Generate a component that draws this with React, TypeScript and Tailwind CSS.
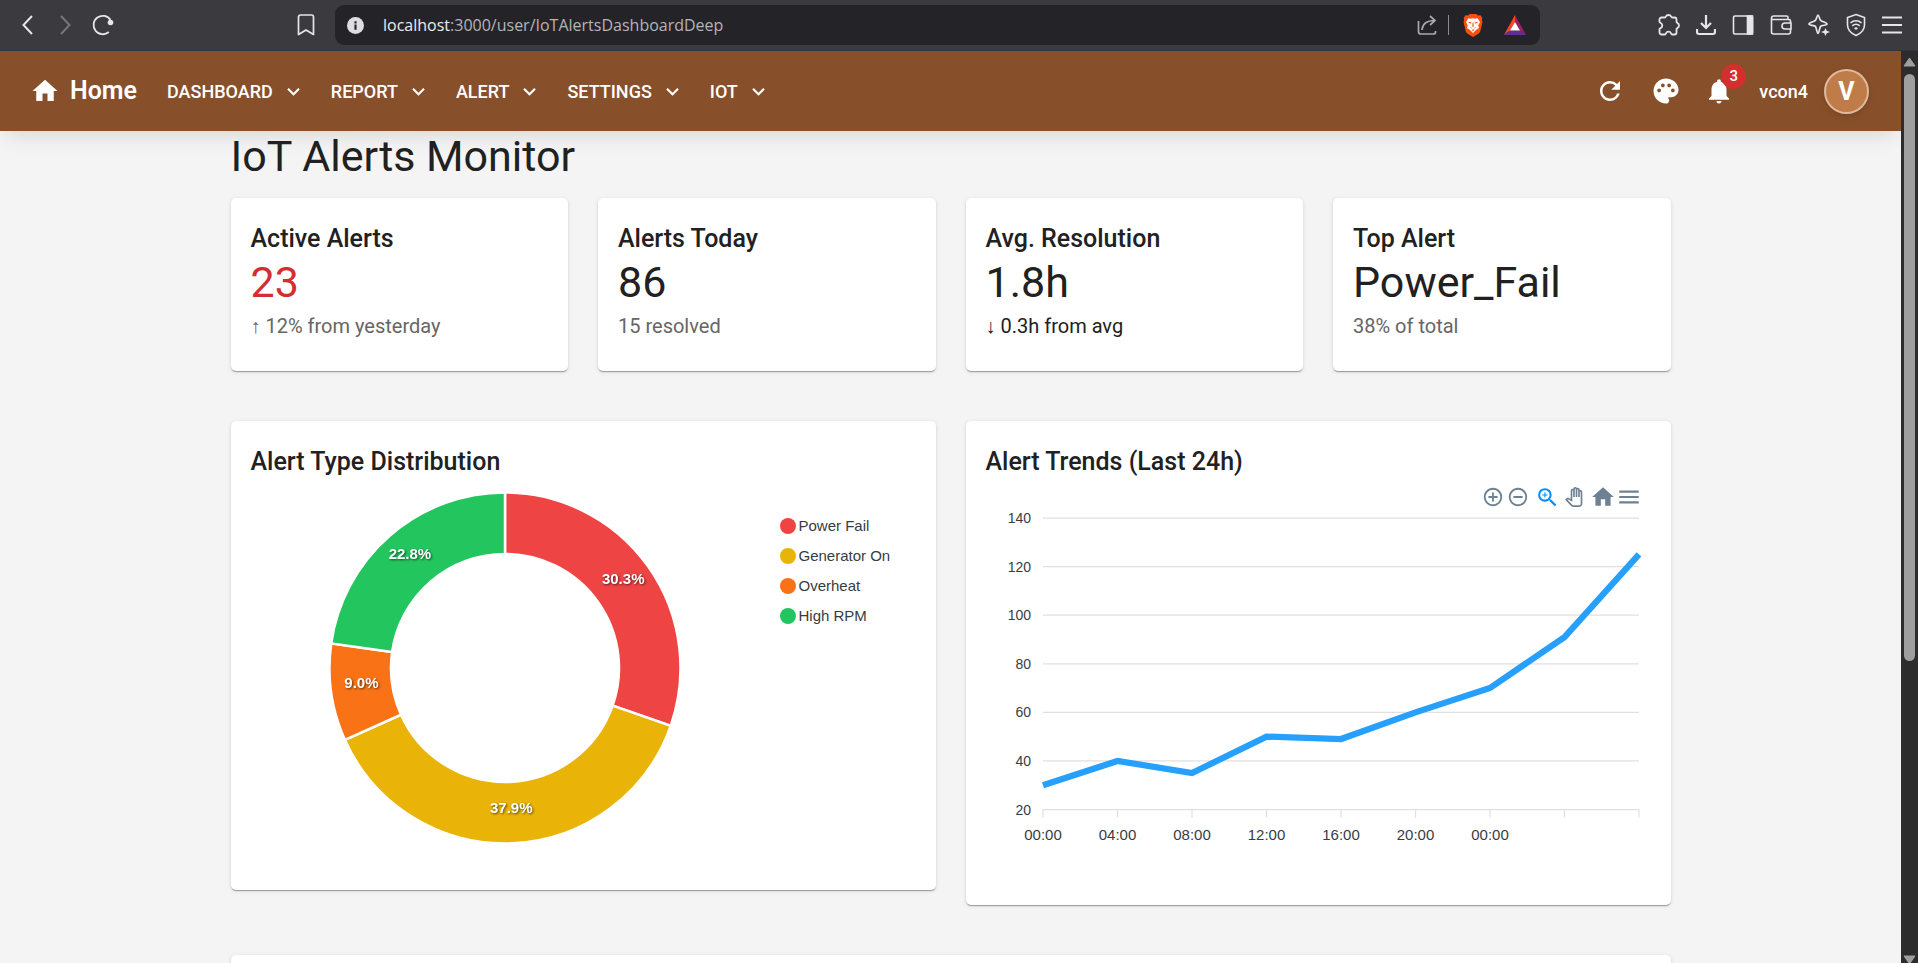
import React from 'react';
import {
  MdAddCircleOutline,
  MdHome,
  MdKeyboardArrowDown,
  MdMenu,
  MdNotifications,
  MdOutlinePanTool,
  MdRefresh,
  MdRemoveCircleOutline,
  MdZoomIn,
} from 'react-icons/md';

const menuItems = ['DASHBOARD', 'REPORT', 'ALERT', 'SETTINGS', 'IOT'];

const stats = [
  { title: 'Active Alerts', value: '23', arrow: '↑', note: '12% from yesterday', valueClass: 'text-[#d32f2f]', noteClass: 'text-[#666666]' },
  { title: 'Alerts Today', value: '86', arrow: '', note: '15 resolved', valueClass: '', noteClass: 'text-[#666666]' },
  { title: 'Avg. Resolution', value: '1.8h', arrow: '↓', note: '0.3h from avg', valueClass: '', noteClass: '' },
  { title: 'Top Alert', value: 'Power_Fail', arrow: '', note: '38% of total', valueClass: '', noteClass: 'text-[#666666]' },
];

const alertTypes = [
  { name: 'Power Fail', count: 44, fill: 'fill-[#ef4444]', dot: 'bg-[#ef4444]' },
  { name: 'Generator On', count: 55, fill: 'fill-[#eab308]', dot: 'bg-[#eab308]' },
  { name: 'Overheat', count: 13, fill: 'fill-[#f97316]', dot: 'bg-[#f97316]' },
  { name: 'High RPM', count: 33, fill: 'fill-[#22c55e]', dot: 'bg-[#22c55e]' },
];

const trend = [30, 40, 35, 50, 49, 60, 70, 91, 125];
const trendLabels = ['00:00', '04:00', '08:00', '12:00', '16:00', '20:00', '00:00'];
const yTicks = [140, 120, 100, 80, 60, 40, 20];

const point = (radius: number, angle: number) => [176 + radius * Math.sin(angle), 176 - radius * Math.cos(angle)];

const DonutChart: React.FC = () => {
  const total = alertTypes.reduce((sum, t) => sum + t.count, 0);
  const outer = 175.5;
  const inner = 114;
  let angle = 0;

  const slices = alertTypes.map((t) => {
    const start = angle;
    const end = start + (t.count / total) * Math.PI * 2;
    angle = end;
    const large = end - start > Math.PI ? 1 : 0;
    const [x1, y1] = point(outer, start);
    const [x2, y2] = point(outer, end);
    const [x3, y3] = point(inner, end);
    const [x4, y4] = point(inner, start);
    const [lx, ly] = point(145, (start + end) / 2);
    return {
      ...t,
      d: `M${x1} ${y1}A${outer} ${outer} 0 ${large} 1 ${x2} ${y2}L${x3} ${y3}A${inner} ${inner} 0 ${large} 0 ${x4} ${y4}Z`,
      lx,
      ly,
      label: `${((t.count / total) * 100).toFixed(1)}%`,
    };
  });

  return (
    <svg viewBox="0 0 352 352" className="h-[352px] w-[352px]" role="img" aria-label="Alert type distribution">
      {slices.map((s) => (
        <path key={s.name} d={s.d} className={s.fill} stroke="#fff" strokeWidth="2.5" />
      ))}
      {slices.map((s) => (
        <text
          key={s.name}
          x={s.lx}
          y={s.ly}
          textAnchor="middle"
          className="fill-white font-['Liberation_Sans',sans-serif] text-[15px] font-bold drop-shadow-[1px_1px_1px_rgba(0,0,0,0.6)]"
        >
          {s.label}
        </text>
      ))}
    </svg>
  );
};

const TrendChart: React.FC = () => {
  const left = 57;
  const right = 653;
  const top = 9;
  const bottom = 300.5;
  const x = (i: number) => left + (i * (right - left)) / (trend.length - 1);
  const y = (v: number) => bottom - ((v - 20) / 120) * (bottom - top);

  return (
    <svg
      viewBox="0 0 665 366"
      className="block w-full fill-[#373d3f] font-['Liberation_Sans',sans-serif]"
      role="img"
      aria-label="Alert trends"
    >
      {yTicks.map((t) => (
        <g key={t}>
          <line x1={left} x2={right} y1={y(t)} y2={y(t)} stroke="#e0e0e0" strokeWidth="1.25" />
          <text x="45" y={y(t) + 5} textAnchor="end" className="text-[14px]">{t}</text>
        </g>
      ))}
      {trend.map((_, i) => (
        <line key={i} x1={x(i)} x2={x(i)} y1={bottom} y2={bottom + 8} stroke="#e0e0e0" strokeWidth="1.25" />
      ))}
      {trendLabels.map((t, i) => (
        <text key={i} x={x(i)} y="331" textAnchor="middle" className="text-[15px]">{t}</text>
      ))}
      <polyline
        points={trend.map((v, i) => `${x(i)},${y(v)}`).join(' ')}
        fill="none"
        stroke="#26a0fc"
        strokeWidth="6.25"
      />
    </svg>
  );
};

const Card: React.FC<{ title?: string; children?: React.ReactNode }> = ({ title, children }) => (
  <section className="rounded-[5px] bg-white px-5 pt-[21px] pb-[30px] shadow-[0_2px_1px_-1px_rgba(0,0,0,0.2),0_1px_1px_rgba(0,0,0,0.14),0_1px_4px_rgba(0,0,0,0.12)]">
    {title && <h2 className="text-[25px] leading-[40px] font-medium">{title}</h2>}
    {children}
  </section>
);

const BrowserBar: React.FC = () => (
  <div className="flex h-[51px] shrink-0 items-center border-b border-[#2f3238] bg-[#3b3a3f] pr-4 pl-[18px] text-[#e6e6ea]">
    <div className="flex w-[317px] shrink-0 items-center">
      <button aria-label="Back" className="mr-[17px]">
        <svg width="20" height="20" viewBox="0 0 20 20" fill="none" stroke="currentColor" strokeWidth="2"><path d="m14 1-8.5 9 8.5 9" /></svg>
      </button>
      <button aria-label="Forward" className="mr-[17px] text-[#77767b]">
        <svg width="20" height="20" viewBox="0 0 20 20" fill="none" stroke="currentColor" strokeWidth="2"><path d="m6 1 8.5 9L6 19" /></svg>
      </button>
      <button aria-label="Reload">
        <svg width="22" height="22" viewBox="0 0 22 22" fill="none" stroke="currentColor" strokeWidth="1.8">
          <path d="M16.8 18A9.2 9.2 0 1 1 18.5 6" />
          <circle cx="18.5" cy="8.5" r="2.8" fill="currentColor" stroke="none" />
        </svg>
      </button>
      <button aria-label="Bookmark" className="mr-[20px] ml-auto">
        <svg width="18" height="22" viewBox="0 0 18 22" fill="none" stroke="currentColor" strokeWidth="1.7" strokeLinejoin="round"><path d="M1.5 3a2 2 0 0 1 2-2h11a2 2 0 0 1 2 2v17.5L9 16l-7.5 4.500z" /></svg>
      </button>
    </div>
    <div className="flex h-10 flex-1 items-center rounded-[9px] bg-[#242328] pr-[14px] pl-3">
      <svg width="17" height="17" viewBox="0 0 16 16" className="shrink-0">
        <circle cx="8" cy="8" r="8" fill="#dddde2" />
        <path d="M7 7h2v5H7zM7 4h2v2H7z" fill="#242328" />
      </svg>
      <div className="ml-[19px] flex-1 font-['Open_Sans',sans-serif] text-[16px] text-[#b5b4ba]">
        <span className="text-[#ececf0]">localhost</span>:3000/user/IoTAlertsDashboardDeep
      </div>
      <div className="flex items-center">
        <button aria-label="Share" className="mr-[11px] text-[#a9a8ad]">
          <svg width="20" height="20" viewBox="0 0 20 20" fill="none" stroke="currentColor" strokeWidth="1.7">
            <path d="M1.5 6v10.500A2.500 2.500 0 0 0 4 19h12.500a2 2 0 0 0 2-2v-1M5 15c.5-6 4-9.500 12.500-9.500M13 1l5 4.500-5 4.500" />
          </svg>
        </button>
        <div className="mr-[14px] h-5 w-px bg-[#8c8b90]" />
        <button aria-label="Brave Shields" className="mr-[21px]">
          <svg width="20" height="23" viewBox="0 0 20 23">
            <path d="M5 1.5 6.800 0h6.400L15 1.500l2.500-.2L19.300 4l-.4 2 .6 2-2.300 9.500c-.3 1-1 1.700-1.800 2.300L10 23l-5.400-3.200c-.8-.6-1.500-1.300-1.800-2.300L.5 8l.6-2-.4-2 1.800-2.700z" fill="#fb4f0c" />
            <path d="m3 8 2.500-3.800 2.300.5L10 4.200l2.200.5 2.300-.5L17 8l-1.800 3.500.8 2.500-3 2-3 3-3-3-3-2 .8-2.500z" fill="#fff" />
            <path d="m5.200 7.700 3.300.7-.4 1.200-2.300-.5zM14.800 7.700l-3.300.7.400 1.200 2.300-.5zM9.600 8.500h.8l.3 4-.7.500-.7-.5zM7 12.800l2 1.200-.8.600zM13 12.800l-2 1.200.8.600zM8.500 16l1.500-.7 1.500.7-1.500 1z" fill="#fb4f0c" />
          </svg>
        </button>
        <button aria-label="Brave Rewards">
          <svg width="22" height="20" viewBox="0 0 22 20">
            <path d="M11 0 0 20l6-4.500L11 7z" fill="#ff4724" />
            <path d="m11 0 11 20-6-4.500L11 7z" fill="#9e1f63" />
            <path d="M0 20h22l-6-4.500H6z" fill="#662d91" />
            <path d="m11 7 5 8.500H6z" fill="#fff" />
          </svg>
        </button>
      </div>
    </div>
    <div className="ml-[118px] flex items-center gap-4">
      <button aria-label="Extensions">
        <svg width="22" height="22" viewBox="0 0 22 22" fill="none" stroke="currentColor" strokeWidth="1.8" strokeLinejoin="round">
          <path d="M1.5 5.500a2 2 0 0 1 2-2H7c.8 0 .6-2.500 3.500-2.500S13.200 3.500 14 3.500h2.500a2 2 0 0 1 2 2V8c0 .8 2.500 1 2.500 3.500s-2.500 2.700-2.500 3.500v3.500a2 2 0 0 1-2 2H14c-1 0-.7-2.800-3.500-2.800S8 20.500 7 20.500H3.500a2 2 0 0 1-2-2V15c0-1 2.800-.7 2.800-3.500S1.500 9 1.500 8z" />
        </svg>
      </button>
      <button aria-label="Downloads">
        <svg width="20" height="22" viewBox="0 0 20 22" fill="none" stroke="currentColor" strokeWidth="2.2"><path d="M10 1v13M5 9l5 5 5-5M1 15v3a2 2 0 0 0 2 2h14a2 2 0 0 0 2-2v-3" /></svg>
      </button>
      <button aria-label="Sidebar">
        <svg width="22" height="22" viewBox="0 0 22 22" fill="none" stroke="currentColor" strokeWidth="1.6"><rect x="1.5" y="2" width="19" height="18" rx="1.5" /><path d="M15.500 2h5v18h-5z" fill="currentColor" /></svg>
      </button>
      <button aria-label="Wallet">
        <svg width="22" height="22" viewBox="0 0 22 22" fill="none" stroke="currentColor" strokeWidth="1.6"><path d="M20.500 9V7A1.500 1.500 0 0 0 19 5.500H1.500M20.500 15v3a2 2 0 0 1-2 2h-15a2 2 0 0 1-2-2V4a2 2 0 0 1 2-2h13a1.500 1.500 0 0 1 1.500 1.500v2M21 9h-6a3 3 0 0 0 0 6h6z" /></svg>
      </button>
      <button aria-label="Leo AI">
        <svg width="22" height="22" viewBox="0 0 22 22" fill="none" stroke="currentColor" strokeWidth="1.7" strokeLinejoin="round"><path d="M10 1c.9 0 1.500 4.300 2.600 5.400S19 8.500 19 10s-5.300 1-6.400 2.400S11 19.500 10 19.500s-1.500-5.800-2.600-7.100S1 11.500 1 10s5.300-2.500 6.400-3.600S9.100 1 10 1z" /><path d="m17.500 14 1.200 2.800 3.300 1.200-3.300 1.200-1.200 2.800-1.200-2.800L13 18l3.300-1.200z" fill="currentColor" stroke="none" /></svg>
      </button>
      <button aria-label="VPN">
        <svg width="20" height="24" viewBox="0 0 20 24" fill="none" stroke="currentColor" strokeWidth="1.6"><path d="m10 1.500 8.500 3V12c0 5-4 8.500-8.500 10.500C5.500 20.500 1.500 17 1.500 12V4.500zM4.500 10a8 8 0 0 1 11 0M6.300 12.800a5.500 5.500 0 0 1 7.400 0" /><path d="M8 15.200a3 3 0 0 1 4 0L10 17z" fill="currentColor" stroke="none" /></svg>
      </button>
      <button aria-label="Menu">
        <svg width="20" height="20" viewBox="0 0 20 20" stroke="currentColor" strokeWidth="1.8"><path d="M0 2.500h20M0 10h20M0 17.500h20" /></svg>
      </button>
    </div>
  </div>
);

const NavBar: React.FC = () => (
  <header className="z-10 flex h-20 shrink-0 items-center justify-between bg-[#88502a] pr-8 pl-[30px] text-white shadow-[0_10px_20px_-6px_rgba(0,0,0,0.12)]">
    <div className="flex items-center">
      <a href="#" className="flex items-center gap-[10px] text-[25px] font-semibold">
        <MdHome size={30} />
        Home
      </a>
      <nav className="ml-[30px] flex items-center gap-[25px]">
        {menuItems.map((item) => (
          <button key={item} className="flex items-center gap-2 text-[18px] font-medium">
            {item}
            <MdKeyboardArrowDown size={25} />
          </button>
        ))}
      </nav>
    </div>
    <div className="flex items-center">
      <button aria-label="Refresh" className="mr-[26px]"><MdRefresh size={30} /></button>
      <button aria-label="Theme" className="mr-[23px]">
        <svg width="30" height="30" viewBox="0 0 24 24" fill="currentColor">
          <path d="M12 2C6.490 2 2 6.490 2 12s4.490 10 10 10c1.380 0 2.500-1.120 2.500-2.500 0-.610-.230-1.200-.640-1.670-.080-.100-.130-.210-.130-.330 0-.280.220-.500.500-.500H16c3.310 0 6-2.690 6-6 0-4.960-4.490-9-10-9zm5.500 11c-.830 0-1.500-.670-1.500-1.500s.670-1.500 1.500-1.500 1.500.670 1.500 1.500-.670 1.500-1.500 1.500zm-3-4c-.830 0-1.500-.670-1.500-1.500S13.670 6 14.500 6s1.500.670 1.500 1.500S15.330 9 14.500 9zM5 11.500c0-.830.670-1.500 1.500-1.500s1.500.670 1.500 1.500S7.330 13 6.500 13 5 12.330 5 11.500zm6-4c0 .830-.670 1.500-1.500 1.500S8 8.330 8 7.500 8.670 6 9.500 6s1.500.670 1.500 1.500z" />
        </svg>
      </button>
      <button aria-label="Notifications" className="relative mr-[25px]">
        <MdNotifications size={30} />
        <span className="absolute -top-3 -right-3 flex h-[25px] w-[25px] items-center justify-center rounded-full bg-[#d32f2f] text-[15px] font-medium">3</span>
      </button>
      <span className="mr-4 text-[18px] font-medium">vcon4</span>
      <button className="h-[45px] w-[45px] rounded-full border-2 border-[#dfb99b] bg-[#c07c48] text-[25px] leading-none font-bold shadow-[0_2px_6px_rgba(0,0,0,0.15)]">V</button>
    </div>
  </header>
);

const ScrollTrack: React.FC = () => (
  <div className="flex w-[17px] shrink-0 flex-col items-center bg-[#2c2c2c] pt-[6px]" aria-hidden="true">
    <svg width="13" height="10" viewBox="0 0 13 10" className="shrink-0"><path d="M6.500 1 12 9H1z" fill="#9f9f9f" stroke="#9f9f9f" strokeLinejoin="round" /></svg>
    <div className="flex w-full flex-1 justify-center pt-[7px]">
      <div className="h-2/3 w-[11px] rounded-full bg-[#9f9f9f]" />
    </div>
    <svg width="13" height="8" viewBox="0 0 13 8" className="shrink-0"><path d="M1 1h11L6.500 9z" fill="#9f9f9f" stroke="#9f9f9f" strokeLinejoin="round" /></svg>
  </div>
);

export default function App() {
  return (
    <div className="flex h-screen flex-col overflow-hidden font-[Roboto,sans-serif] text-[#212121]">
      <BrowserBar />
      <div className="flex min-h-0 flex-1">
        <div className="flex min-w-0 flex-1 flex-col overflow-hidden bg-[#f4f4f4]">
          <NavBar />
          <main className="mx-auto w-full max-w-[1440px]">
            <h1 className="mb-4 text-[43px] leading-[51px]">IoT Alerts Monitor</h1>

            <div className="mb-[50px] grid grid-cols-4 gap-[30px]">
              {stats.map((s) => (
                <Card key={s.title} title={s.title}>
                  <p className={`mb-[5px] text-[43px] leading-[47px] ${s.valueClass}`}>{s.value}</p>
                  <p className={`text-[20px] leading-[30px] ${s.noteClass}`}>
                    {s.arrow && <span className="font-['Liberation_Sans',sans-serif]">{s.arrow}</span>} {s.note}
                  </p>
                </Card>
              ))}
            </div>

            <div className="mb-[50px] grid grid-cols-2 items-start gap-[30px]">
              <Card title="Alert Type Distribution">
                <div className="flex h-[378px] items-start">
                  <div className="flex flex-1 justify-center pt-[10px] pr-5">
                    <DonutChart />
                  </div>
                  <ul className="w-[136px] pt-[29px] font-['Liberation_Sans',sans-serif] text-[15px] leading-[30px] text-[#373d3f]">
                    {alertTypes.map((t) => (
                      <li key={t.name} className="flex items-center gap-[3px]">
                        <span className={`h-4 w-4 rounded-full ${t.dot}`} />
                        {t.name}
                      </li>
                    ))}
                  </ul>
                </div>
              </Card>

              <Card title="Alert Trends (Last 24h)">
                <div className="mt-[3px] flex h-6 items-center justify-end pr-[9px] text-[#6e8192]">
                  <button aria-label="Zoom in" className="mr-[3px]"><MdAddCircleOutline size={22} /></button>
                  <button aria-label="Zoom out" className="mr-[6px]"><MdRemoveCircleOutline size={22} /></button>
                  <button aria-label="Selection zoom" className="mr-[4px] text-[#008ffb]"><MdZoomIn size={25} /></button>
                  <button aria-label="Pan" className="mr-[6px]"><MdOutlinePanTool size={20} /></button>
                  <button aria-label="Reset zoom"><MdHome size={26} /></button>
                  <button aria-label="Chart menu"><MdMenu size={26} /></button>
                </div>
                <TrendChart />
              </Card>
            </div>

            <Card />
          </main>
        </div>
        <ScrollTrack />
      </div>
    </div>
  );
}
